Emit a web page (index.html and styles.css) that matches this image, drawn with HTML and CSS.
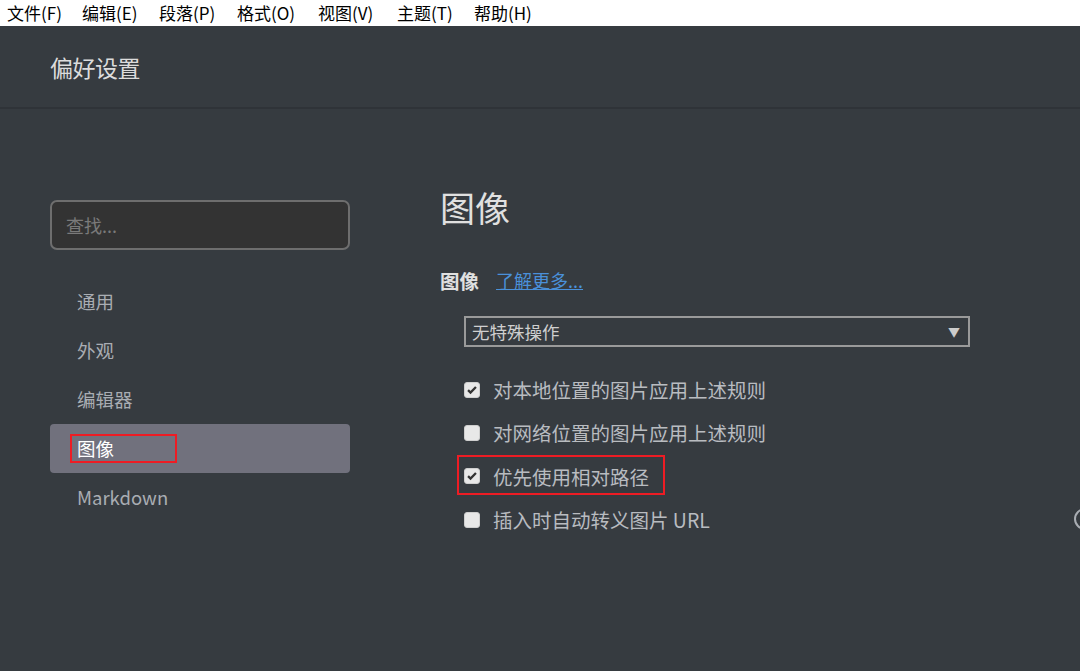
FILE: index.html
```html
<!DOCTYPE html>
<html lang="zh">
<head>
<meta charset="utf-8">
<link rel="stylesheet" href="styles.css">
</head>
<body>
<div class="menubar">
  <span>文件(F)</span><span>编辑(E)</span><span>段落(P)</span><span>格式(O)</span><span>视图(V)</span><span>主题(T)</span><span>帮助(H)</span>
</div>
<div class="header"><h1>偏好设置</h1></div>
<div class="main">
  <aside class="side">
    <div class="search">查找...</div>
    <ul class="nav">
      <li>通用</li>
      <li>外观</li>
      <li>编辑器</li>
      <li class="active"><span class="mark">图像</span></li>
      <li>Markdown</li>
    </ul>
  </aside>
  <section class="content">
    <h2>图像</h2>
    <div class="subhead"><b>图像</b><a href="#">了解更多...</a></div>
    <div class="select"><span>无特殊操作</span><span class="arrow">▼</span></div>
    <div class="opts">
      <div class="opt"><span class="cb checked"><svg viewBox="0 0 16 16"><path d="M3.5 8.2 L6.3 11 L12.5 4.5" fill="none" stroke="#333" stroke-width="2.6"/></svg></span>对本地位置的图片应用上述规则</div>
      <div class="opt"><span class="cb"></span>对网络位置的图片应用上述规则</div>
      <div class="opt boxed"><span class="cb checked"><svg viewBox="0 0 16 16"><path d="M3.5 8.2 L6.3 11 L12.5 4.5" fill="none" stroke="#333" stroke-width="2.6"/></svg></span>优先使用相对路径</div>
      <div class="opt"><span class="cb"></span>插入时自动转义图片 URL<span class="info"></span></div>
    </div>
  </section>
</div>
</body>
</html>
```
FILE: styles.css
```css
* { box-sizing: border-box; }
html, body { margin: 0; padding: 0; }
body {
  width: 1080px; height: 671px; overflow: hidden;
  background: #363b40;
  font-family: "Microsoft YaHei", "Noto Sans CJK SC", "Liberation Sans", sans-serif;
}
.menubar {
  height: 26px; background: #fff; color: #000;
  display: flex; padding-left: 7px;
  font-size: 17px; line-height: 26px;
}
.menubar span { white-space: nowrap; }
.menubar span:nth-child(1) { width: 75px; }
.menubar span:nth-child(2) { width: 77px; }
.menubar span:nth-child(3) { width: 78px; }
.menubar span:nth-child(4) { width: 81px; }
.menubar span:nth-child(5) { width: 79px; }
.menubar span:nth-child(6) { width: 77px; }
.header {
  height: 83px; background: #363b40;
  border-bottom: 2px solid #2f3338;
  padding: 0 50px;
}
.header h1 {
  margin: 0; font-weight: normal; font-size: 23px; color: #dcdcdc;
  line-height: 82px; letter-spacing: -0.5px;
}
.main { display: flex; padding-top: 91px; }
.side { width: 300px; margin-left: 50px; }
.search {
  height: 50px; border: 2px solid #6e6e6e; border-radius: 7px;
  background: #333333; color: #7a7a7a;
  font-size: 18px; line-height: 46px; padding-left: 14px;
}
.nav { list-style: none; margin: 0; padding: 0; margin-top: 27px; }
.nav li {
  height: 49px; line-height: 49px; padding-left: 27px;
  font-size: 18.5px; color: #a9adb3; border-radius: 4px;
}
.nav li.active { background: #71717d; color: #fff; }
.nav li.active .mark {
  display: inline-block; border: 2px solid #ee1c24;
  width: 107px; height: 29px; line-height: 24px; margin-left: -7px; padding-left: 5px;
  vertical-align: middle; margin-top: -4px;
}
.content { margin-left: 90px; flex: 1; position: relative; }
.content h2 {
  margin: 0; font-weight: normal; font-size: 35px; color: #e0e0e0;
  line-height: 40px; margin-top: -13px;
}
.subhead { margin-top: 41px; font-size: 19.5px; color: #e0e0e0; display: flex; align-items: center; height: 24px; }
.subhead b { font-weight: bold; margin-right: 17px; }
.subhead a { color: #4a90d9; font-size: 18px; text-decoration: underline; }
.select {
  margin-top: 24px; margin-left: 24px; width: 506px; height: 31px;
  border: 2px solid #9a9a9a; color: #cfcfcf; font-size: 17.5px;
  display: flex; justify-content: space-between; align-items: center;
  padding: 0 8px 0 6px;
}
.select .arrow { font-size: 12px; color: #ccc; }
.opts { margin-top: 21px; margin-left: 24px; }
.opt {
  height: 43.3px; display: flex; align-items: center;
  font-size: 19.5px; color: #b9bcc0; position: relative;
}
.cb {
  width: 16px; height: 16px; border-radius: 3px; background: #e8e8e8;
  margin-right: 13px; display: inline-flex; align-items: center; justify-content: center;
  border: 1px solid #cfcfcf;
}
.cb svg { width: 14px; height: 14px; }
.opt.boxed::after {
  content: ""; position: absolute; left: -7px; top: 0;
  width: 204px; height: 36px; border: 2px solid #ee1c24;
}
.info {
  position: absolute; left: 610px; top: 10px;
  width: 22px; height: 22px; border-radius: 50%;
  border: 2px solid #a9adb3;
}
```
